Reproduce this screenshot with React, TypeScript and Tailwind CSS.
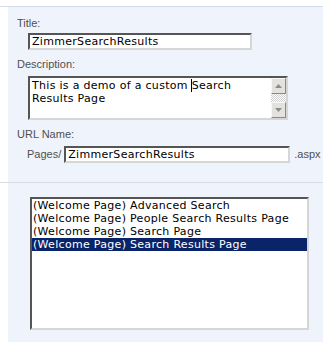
import React from "react";

const labelCls = "block text-[11px] leading-[13px] text-[#4f4f4f] font-['Liberation_Sans',Arial,sans-serif]";
const fieldText = "font-['DejaVu_Sans',Verdana,sans-serif] text-[11px] leading-[13px] tracking-[0.3px] text-black";
const insetBorder = "border-2 border-t-[#555555] border-l-[#555555] border-r-[#d6d6d6] border-b-[#d6d6d6] bg-white";

const ScrollButton = ({ up }: { up?: boolean }) => (
  <div className="h-[16px] w-[15px] bg-[#e4e2dc] border border-t-[#f8f8f8] border-l-[#f8f8f8] border-r-[#8a8a8a] border-b-[#8a8a8a] flex items-center justify-center">
    <svg width="7" height="4" viewBox="0 0 7 4">
      {up ? <path d="M0 4 L3.5 0 L7 4 Z" fill="#8c8c8c" /> : <path d="M0 0 L3.5 4 L7 0 Z" fill="#8c8c8c" />}
    </svg>
  </div>
);

const App = () => {
  const pages = [
    "(Welcome Page) Advanced Search",
    "(Welcome Page) People Search Results Page",
    "(Welcome Page) Search Page",
    "(Welcome Page) Search Results Page",
  ];

  return (
    <div className="w-[323px] h-[342px] bg-white overflow-hidden">
      <div className="h-[6px]" />
      {/* page settings */}
      <div className="border-t border-[#d6dce5] pl-2">
        <div className="bg-[#eff4fc] pt-[10px] pb-[19px] pl-[9px]">
          <label className={labelCls}>Title:</label>
          <div className={`${insetBorder} ml-[11px] mt-[3px] w-[224px] h-[17px] px-[2px] ${fieldText}`}>
            ZimmerSearchResults
          </div>

          <label className={`${labelCls} mt-[8px]`}>Description:</label>
          <div className={`${insetBorder} ml-[11px] mt-[5px] w-[260px] h-[44px] flex`}>
            <div className={`flex-1 px-[2px] pt-[1px] ${fieldText}`}>
              This is a demo of a custom <span className="border-l border-black -ml-px"></span>Search
              <br />
              Results Page
            </div>
            <div className="w-[15px] flex flex-col">
              <ScrollButton up />
              <div className="flex-1 bg-[repeating-conic-gradient(#cfcfcf_0_25%,#ffffff_0_50%)] bg-[length:2px_2px]" />
              <ScrollButton />
            </div>
          </div>

          <label className={`${labelCls} mt-[8px]`}>URL Name:</label>
          <div className="mt-[5px] flex items-center">
            <span className="ml-[10px] text-[11px] leading-[13px] text-[#4f4f4f] font-['Liberation_Sans',Arial,sans-serif]">Pages/</span>
            <div className={`${insetBorder} ml-[3px] w-[226px] h-[17px] px-[2px] ${fieldText}`}>
              ZimmerSearchResults
            </div>
            <span className="ml-[4px] text-[11px] leading-[13px] text-[#4f4f4f] font-['Liberation_Sans',Arial,sans-serif]">.aspx</span>
          </div>
        </div>
      </div>

      {/* page list */}
      <div className="border-t border-[#d6dce5] pl-2">
        <div className="bg-[#eff4fc] pt-[14px] pb-[12px] pl-[22px]">
          <div className={`${insetBorder} w-[279px] h-[133px]`}>
            {pages.map((p, i) => (
              <div
                key={p}
                className={`pl-px whitespace-nowrap ${fieldText} ${i === 3 ? "bg-[#0a246a] text-white" : ""}`}
              >
                {p}
              </div>
            ))}
          </div>
        </div>
      </div>
    </div>
  );
};

export default App;
